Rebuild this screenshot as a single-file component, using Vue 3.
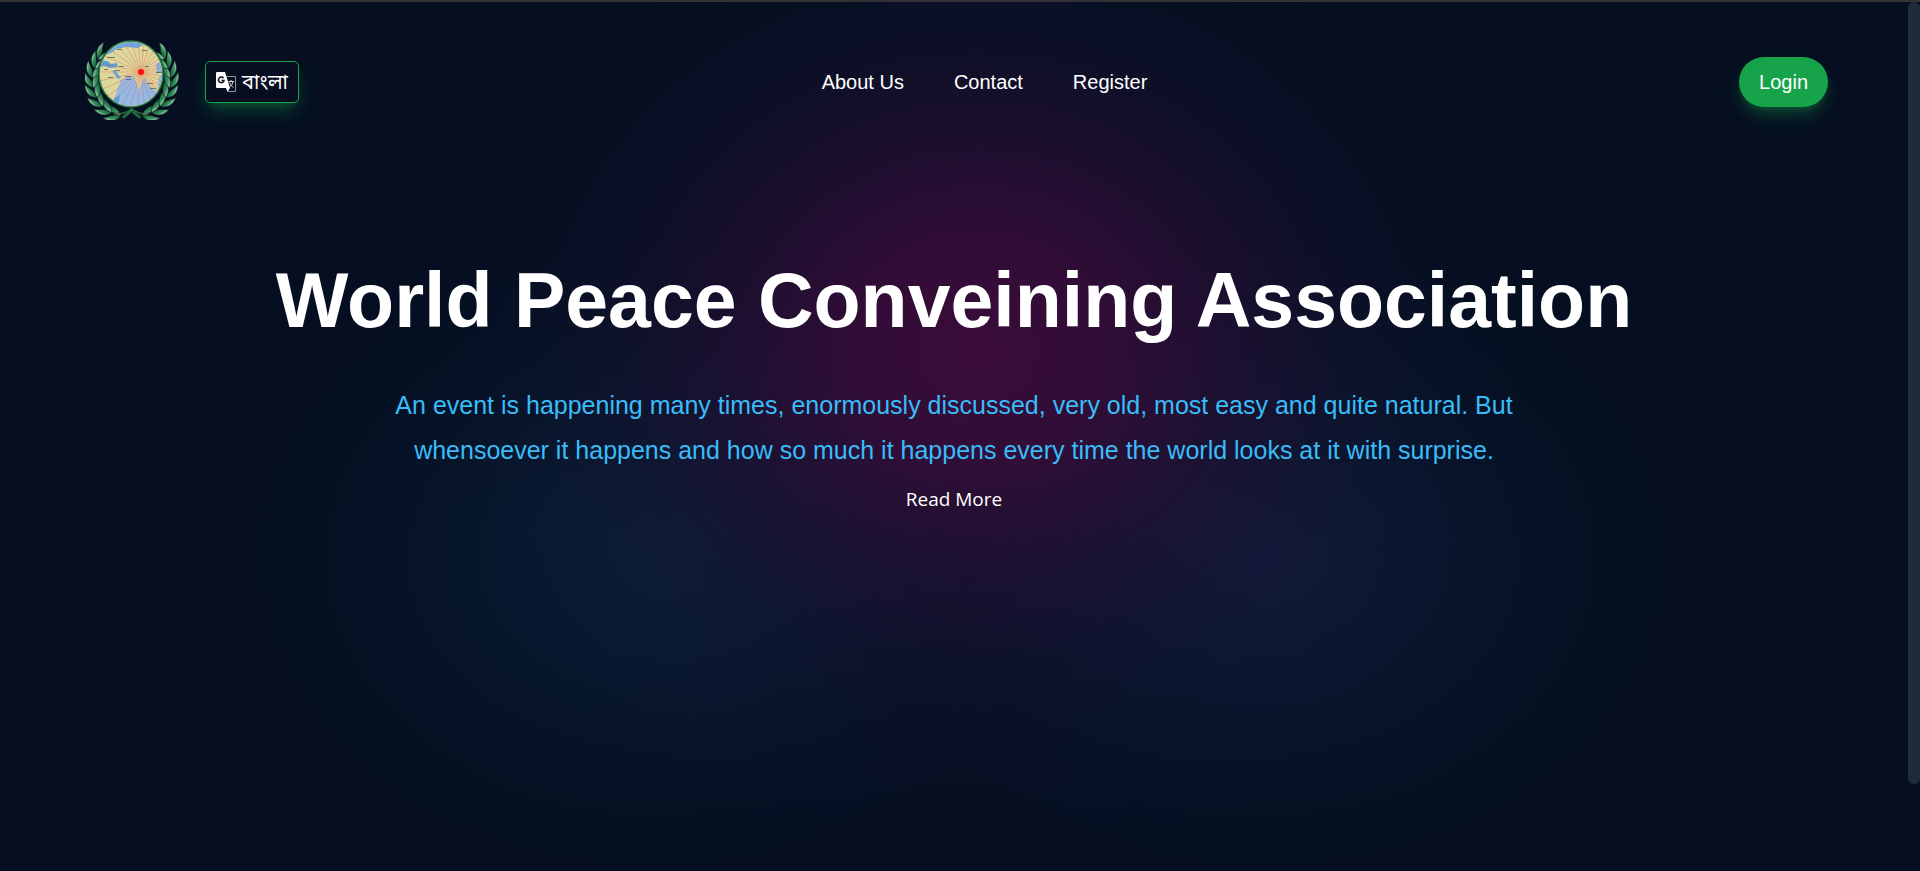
<script setup>
const navLinks = ['About Us', 'Contact', 'Register']
const rays = Array.from({ length: 30 }, (_, i) => i * 12)
const leaves = [
  { x: 33, y: 75, r: -78 }, { x: 24, y: 71, r: -60 }, { x: 16, y: 64, r: -42 },
  { x: 11, y: 55, r: -24 }, { x: 8, y: 45, r: -10 }, { x: 8, y: 35, r: 6 },
  { x: 11, y: 26, r: 22 }, { x: 15, y: 17, r: 38 }
]
</script>

<template>
  <div class="page">
    <header class="header">
      <div class="brand">
        <a href="#" class="logo" aria-label="Home">
          <svg width="94" height="80" viewBox="0 0 94 80">
            <defs>
              <linearGradient id="leaf" x1="0" y1="0" x2="1" y2="0">
                <stop offset="0" stop-color="#b4ccbf" />
                <stop offset=".35" stop-color="#3a9561" />
                <stop offset="1" stop-color="#145a34" />
              </linearGradient>
              <clipPath id="globe"><ellipse cx="46" cy="34" rx="31" ry="32" /></clipPath>
              <g id="branch">
                <g v-for="(l, i) in leaves" :key="i" :transform="`translate(${l.x} ${l.y}) rotate(${l.r})`">
                  <path d="M0 3C-7 0-9-7-6-14-4-8 1-5 0 3Z" fill="url(#leaf)" stroke="#061513" stroke-width=".5" />
                  <path d="M0 3C-1-5 2-9 8-13 8-6 6 0 0 3Z" fill="url(#leaf)" stroke="#061513" stroke-width=".5" />
                </g>
                <path d="M27 72c9 3 14-1 20-4l10 9-3 2-9-8c-6 3-12 5-18 1Z" fill="url(#leaf)" stroke="#061513" stroke-width=".5" />
              </g>
            </defs>
            <use href="#branch" />
            <use href="#branch" transform="translate(93 0) scale(-1 1)" />
            <ellipse cx="46" cy="34" rx="33" ry="34" fill="#061513" />
            <ellipse cx="46" cy="34" rx="32" ry="33" fill="#dcd79c" stroke="#2a7b4e" stroke-width="1.500" />
            <g clip-path="url(#globe)">
              <path d="M20 15l6-2 5-4 10-2 12 1 10-6H30L16 14Z" fill="#6ba7df" />
              <path d="M15 20l7 1 4 3 6-1 1 4-8 1-5-2-5 1Z" fill="#5e9ed6" />
              <path d="M27 31l3-1 6 8-3 1Z" fill="#6ba7df" />
              <path d="M32 50l4-10 8-4 4 0 3 5 3 10 3-9 2-4 7 5 6 8 2-14 10-12v50H30l-2-8Z" fill="#94bae6" />
              <path d="M60 41l9 9 5 2-6-12Z" fill="#e0cc91" />
              <path d="M71 24l7-5v12l-6 3Z" fill="#8ab3df" />
              <path d="M29 58l6-3-2 12-5-2Z" fill="#5e9ed6" />
              <g stroke="#e8604f" stroke-width=".6" opacity=".6">
                <line v-for="a in rays" :key="a" x1="56" y1="32" x2="108" y2="32" :transform="`rotate(${a} 56 32)`" />
              </g>
              <g fill="#45535a" opacity=".7">
                <rect x="32" y="9" width="5" height="1" /><rect x="57" y="10" width="5" height="1" />
                <rect x="22" y="17" width="8" height="1" /><rect x="34" y="26" width="5" height="1" />
                <rect x="19" y="29" width="4" height="1" /><rect x="30" y="30" width="5" height="1" />
                <rect x="40" y="36" width="6" height="1" /><rect x="41" y="39" width="5" height="1" />
                <rect x="23" y="37" width="5" height="1" /><rect x="60" y="26" width="4" height="1" />
                <rect x="71" y="32" width="6" height="1" /><rect x="62" y="43" width="6" height="1" />
                <rect x="65" y="48" width="6" height="1" />
              </g>
            </g>
            <circle cx="56" cy="32" r="3" fill="#ff0a0a" />
          </svg>
        </a>
        <button class="lang" type="button">
          <svg width="20" height="20" viewBox="0 0 20 20" aria-hidden="true">
            <path d="M10 4.500h9.500v15H12" fill="none" stroke="#8d929b" stroke-width="1" />
            <path d="M1 0h8l5 16H1a1 1 0 0 1-1-1V1a1 1 0 0 1 1-1Z" fill="#fff" />
            <path d="M10 16h4l-2.500 4Z" fill="#fff" />
            <path d="M7.500 6.200A2.800 2.800 0 1 0 8 8.500H5.500" fill="none" stroke="#060e20" stroke-width="1.500" />
            <path d="M12.500 9.500H18M15 8v1.500m2 0c-.5 3-2 4.500-3.500 6M13.500 10.500c1 2.500 2.500 4 4 5" fill="none" stroke="#d9dbdf" stroke-width="1" />
          </svg>
          <span lang="bn">বাংলা</span>
        </button>
      </div>
      <nav class="nav">
        <a v-for="link in navLinks" :key="link" href="#">{{ link }}</a>
      </nav>
      <div class="account"><button class="login" type="button">Login</button></div>
    </header>
    <main class="hero">
      <h1>World Peace Conveining Association</h1>
      <p>An event is happening many times, enormously discussed, very old, most easy and quite natural. But whensoever it happens and how so much it happens every time the world looks at it with surprise.</p>
      <a href="#" class="more">Read More</a>
    </main>
    <div class="scroll-thumb"></div>
  </div>
</template>

<style>
body { margin: 0; background: #050e20; }
</style>

<style scoped>
.page {
  position: relative;
  box-sizing: border-box;
  min-height: 100vh;
  padding-right: 12px;
  border-top: 2px solid #333;
  overflow: hidden;
  color: #fff;
  font-family: "Liberation Sans", Arial, sans-serif;
  background:
    radial-gradient(ellipse 23% 44% at 51% 40%, rgba(68, 10, 62, .8), rgba(62, 11, 58, .72) 28%, rgba(46, 12, 52, .42) 58%, rgba(30, 14, 46, .16) 82%, transparent),
    radial-gradient(ellipse 21% 36% at 34% 64%, rgba(16, 38, 70, .56), rgba(12, 34, 62, .4) 40%, rgba(8, 26, 50, .16) 78%, transparent),
    radial-gradient(ellipse 21% 36% at 66% 64%, rgba(22, 34, 72, .56), rgba(14, 32, 62, .4) 40%, rgba(8, 26, 50, .16) 78%, transparent),
    radial-gradient(ellipse 28% 56% at 51% 44%, rgba(28, 18, 58, .62), rgba(20, 18, 48, .36) 60%, transparent),
    #050f21;
}
.header {
  display: grid;
  grid-template-columns: 1fr auto 1fr;
  align-items: center;
  padding: 32px 80px 0 85px;
}
.brand { display: flex; align-items: center; gap: 26px; }
.logo { display: flex; padding: 6px 0 10px; }
.lang {
  display: flex;
  align-items: center;
  gap: 6px;
  height: 42px;
  padding: 0 10px;
  border: 1px solid #16a34a;
  border-radius: 5px;
  background: #060e20;
  color: #fff;
  font: 20px/28px "Noto Sans Bengali", "Liberation Sans", sans-serif;
  box-shadow: 0 10px 18px -3px rgba(22, 163, 74, .35), 0 4px 8px -4px rgba(22, 163, 74, .35);
}
.lang span { padding-top: 4px; }
.nav { display: flex; gap: 50px; padding-left: 56px; }
.nav a { color: #fff; font-size: 20px; line-height: 28px; text-decoration: none; }
.account { display: flex; justify-content: flex-end; }
.login {
  height: 50px;
  padding: 0 20px;
  border: 0;
  border-radius: 25px;
  background: #16a34a;
  color: #fff;
  font: 20px/28px "Liberation Sans", Arial, sans-serif;
  box-shadow: 0 10px 18px -3px rgba(22, 163, 74, .35), 0 4px 8px -4px rgba(22, 163, 74, .35);
}
.hero { display: flex; flex-direction: column; align-items: center; padding: 122px 40px 0; text-align: center; }
h1 { margin: 0; font-size: 77px; line-height: 96px; font-weight: 700; }
p { max-width: 1150px; margin: 35px 0 0; color: #38bdf8; font-size: 25px; line-height: 45px; }
.more { margin-top: 12px; color: #fff; font: 19px/28px "Open Sans", "Noto Sans", sans-serif; text-decoration: none; }
.scroll-thumb { position: absolute; top: 0; right: 0; width: 12px; height: 90%; border-radius: 6px; background: #1f2a3b; }
</style>
